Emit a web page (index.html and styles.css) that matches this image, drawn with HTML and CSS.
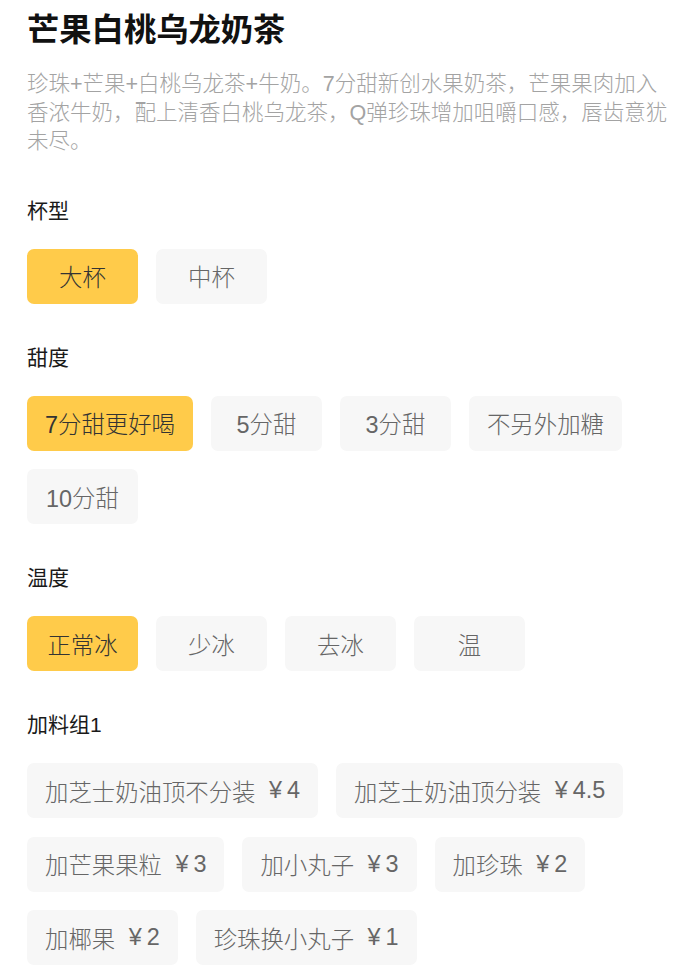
FILE: index.html
```html
<!DOCTYPE html>
<html lang="zh-CN">
<head>
<meta charset="utf-8">
<title>芒果白桃乌龙奶茶</title>
<link rel="stylesheet" href="styles.css">
</head>
<body>
<div class="page">
  <h1 class="title">芒果白桃乌龙奶茶</h1>
  <p class="desc">珍珠+芒果+白桃乌龙茶+牛奶。7分甜新创水果奶茶，芒果果肉加入香浓牛奶，配上清香白桃乌龙茶，Q弹珍珠增加咀嚼口感，唇齿意犹未尽。</p>

  <section class="group">
    <div class="label">杯型</div>
    <div class="chips">
      <span class="chip on">大杯</span>
      <span class="chip">中杯</span>
    </div>
  </section>

  <section class="group">
    <div class="label">甜度</div>
    <div class="chips">
      <span class="chip on">7分甜更好喝</span>
      <span class="chip">5分甜</span>
      <span class="chip">3分甜</span>
      <span class="chip">不另外加糖</span>
      <span class="chip">10分甜</span>
    </div>
  </section>

  <section class="group">
    <div class="label">温度</div>
    <div class="chips">
      <span class="chip on">正常冰</span>
      <span class="chip">少冰</span>
      <span class="chip">去冰</span>
      <span class="chip">温</span>
    </div>
  </section>

  <section class="group">
    <div class="label">加料组1</div>
    <div class="chips">
      <span class="chip">加芝士奶油顶不分装 <span class="price"><span class="yen">¥</span>4</span></span>
      <span class="chip">加芝士奶油顶分装 <span class="price"><span class="yen">¥</span>4.5</span></span>
      <span class="chip">加芒果果粒 <span class="price"><span class="yen">¥</span>3</span></span>
      <span class="chip">加小丸子 <span class="price"><span class="yen">¥</span>3</span></span>
      <span class="chip">加珍珠 <span class="price"><span class="yen">¥</span>2</span></span>
      <span class="chip">加椰果 <span class="price"><span class="yen">¥</span>2</span></span>
      <span class="chip">珍珠换小丸子 <span class="price"><span class="yen">¥</span>1</span></span>
    </div>
  </section>
</div>
</body>
</html>
```

FILE: styles.css
```css
html, body {
  margin: 0;
  padding: 0;
  background: #ffffff;
}

body {
  font-family: "Liberation Sans", "Noto Sans CJK SC", sans-serif;
  color: #222;
}

.page {
  padding: 0 27px;
}

.title {
  margin: 0;
  font-family: "Noto Sans CJK SC", sans-serif;
  font-size: 32.3px;
  line-height: 54px;
  font-weight: 700;
  color: #111;
}

.desc {
  margin: 16px 0 0;
  font-size: 21.5px;
  line-height: 28.5px;
  font-weight: 300;
  color: #a3a3a3;
}

.group {
  margin-top: 40px;
}

.group + .group {
  margin-top: 39px;
}

.label {
  font-size: 21px;
  line-height: 30px;
  color: #1a1a1a;
}

.chips {
  margin-top: 23px;
  display: flex;
  flex-wrap: wrap;
  gap: 18.5px 18px;
}

.chip {
  box-sizing: border-box;
  min-width: 111px;
  height: 55px;
  padding: 0 18px;
  display: inline-flex;
  align-items: center;
  justify-content: center;
  border-radius: 7px;
  background: #f7f7f7;
  color: #666;
  font-size: 23.4px;
  font-weight: 300;
  white-space: pre;
}

.chip.on {
  background: #ffcb4a;
  color: #333;
}

.price {
  margin-left: 7px;
}

.yen {
  margin-right: 5px;
}
```
